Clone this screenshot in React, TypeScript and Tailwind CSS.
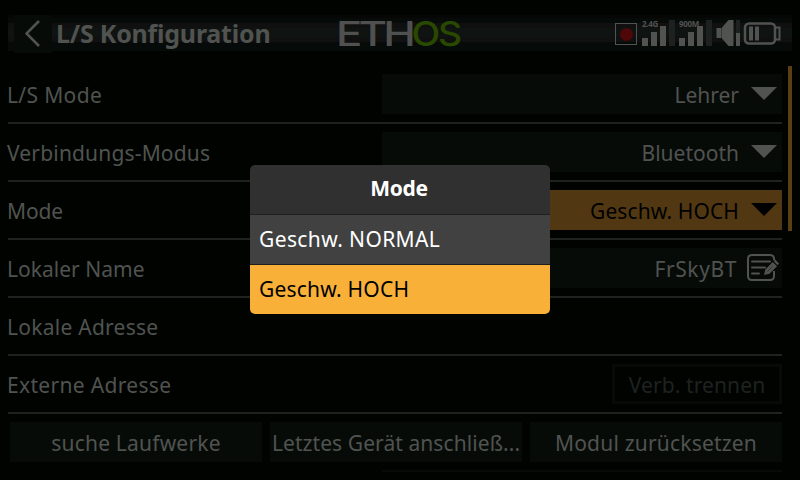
import type { ReactNode } from "react";

function Caret({ dark = false }: { dark?: boolean }) {
  return (
    <svg className={dark ? "block text-black" : "block text-[#505350]"} width="26" height="13" viewBox="0 0 26 13">
      <path d="M0 0H26L13 13Z" fill="currentColor" />
    </svg>
  );
}

function Row({ label, tracking, children }: { label: string; tracking: string; children?: ReactNode }) {
  return (
    <div className="flex h-[58px] shrink-0 items-start border-b-2 border-[#1e2220] pt-2">
      <div className={`-ml-px w-[375px] shrink-0 pt-[1px] leading-10 ${tracking}`}>{label}</div>
      <div className="flex flex-1 justify-end">{children}</div>
    </div>
  );
}

function Field({ value, tracking, active = false }: { value: string; tracking: string; active?: boolean }) {
  return (
    <div
      className={`flex h-10 w-[400px] items-start justify-end pr-[5px] ${
        active ? "bg-[#513812] text-black" : "bg-[#070b08]"
      }`}
    >
      <span className={`mr-3 pt-[1px] leading-10 ${tracking}`}>{value}</span>
      <div className="pt-[13px]">
        <Caret dark={active} />
      </div>
    </div>
  );
}

function EditIcon() {
  return (
    <svg className="block" width="32" height="28" viewBox="0 0 32 28" fill="none" stroke="#505350" strokeWidth="2">
      <path d="M27 6V5Q27 1 23 1H5Q1 1 1 5V22Q1 26 5 26H23Q27 26 27 22V17" />
      <path d="M5 7.5H23M5 13.5H18M5 19.5H12" strokeLinecap="round" />
      <path d="M17 21L18.3 15.5L25.7 8L30 12.3L22.5 19.7Z" fill="#505350" stroke="none" />
      <path d="M26.6 7.1L28.2 5.5L32 9.5L30.5 11.2Z" fill="#505350" stroke="none" />
      <path d="M20.5 17.5L25.5 12.5" stroke="#303331" strokeWidth="1" />
    </svg>
  );
}

function Signal({ label }: { label: string }) {
  return (
    <div className="relative flex h-[26px] w-[33px] items-end gap-[3px]">
      <span className="absolute left-0 -top-[1px] z-10 font-['Open_Sans'] text-[8px] leading-[9px] font-bold tracking-[-0.3px] whitespace-nowrap">
        {label}
      </span>
      <i className="h-2 w-1.5 bg-[#505350]" />
      <i className="h-3.5 w-1.5 bg-[#505350]" />
      <i className="h-5 w-1.5 bg-[#505350]" />
      <i className="h-[26px] w-1.5 bg-[#1d211f]" />
    </div>
  );
}

function StatusBar() {
  return (
    <div className="flex h-[27px] items-end">
      <div className="mr-[5px] mb-[1px] flex h-[22px] w-[22px] items-center justify-center border border-[#505350]">
        <i className="h-[13px] w-[13px] rounded-full bg-[#4f0707]" />
      </div>
      <Signal label="2.4G" />
      <i className="w-1" />
      <Signal label="900M" />
      <svg className="ml-[4px] block" width="25" height="26" viewBox="0 0 25 26">
        <path d="M0.5 8H5V18H0.5ZM6 7.5L12.5 0H17.5V26H12.5L6 18.5Z" fill="#505350" />
        <path d="M5 8H6V18H5Z" fill="#343735" />
        <path d="M20 0H24V13H20Z" fill="#1d211f" />
        <path d="M20 13H24V26H20Z" fill="#505350" />
      </svg>
      <svg className="ml-[2px] block" width="38" height="24" viewBox="0 0 38 24" fill="none" stroke="#505350" strokeWidth="2">
        <rect x="2" y="1.5" width="30" height="20" rx="4" strokeWidth="2.5" />
        <path d="M32.5 5.5H36.5V17.5H32.5" />
        <path d="M8 4.5V18.5M14 4.5V18.5" strokeWidth="4" />
      </svg>
    </div>
  );
}

function Button({ children, tracking }: { children: ReactNode; tracking: string }) {
  return (
    <div className={`h-10 bg-[#070b08] pt-[1px] text-center leading-10 whitespace-nowrap ${tracking}`}>
      {children}
    </div>
  );
}

export default function App() {
  return (
    <div className="relative flex h-[480px] w-[800px] flex-col overflow-hidden bg-[#000300] font-['Noto_Sans',sans-serif] text-[21px] text-[#505350]">
      <header className="mx-2 mt-[15px] grid h-9 grid-cols-[330px_1fr_179px] bg-[linear-gradient(#060604_0_3px,#060a08_3px_8px,#101010_8px_13px,#0f1311_13px_22px,#101010_22px_27px,#060a08_27px)]">
        <div className="flex items-center">
          <div className="ml-[6px] flex h-[38px] w-[38px] items-center justify-center bg-[#070b08]">
            <svg width="16" height="28" viewBox="0 0 16 28" fill="none" stroke="#505350" strokeWidth="2.6">
              <path d="M14 1L1.5 13.5L14 26" />
            </svg>
          </div>
          <h1 className="-mt-[2px] ml-[4px] text-[25px] leading-9 font-bold tracking-[-0.22px]">L/S Konfiguration</h1>
        </div>
        <svg
          className="block overflow-visible"
          width="126"
          height="36"
          viewBox="338 15 126 36"
          fontFamily="Inter, sans-serif"
          fontWeight="500"
          fontSize="34.4"
        >
          <text x="336" y="46" textLength="76" letterSpacing="-3" lengthAdjust="spacingAndGlyphs" fill="#505050">ETH</text>
          <text x="411.5" y="46" textLength="48.5" letterSpacing="-2" lengthAdjust="spacingAndGlyphs" fill="#294900">OS</text>
        </svg>
        <div className="flex items-start justify-end pt-[4px] pr-[11px]">
          <StatusBar />
        </div>
      </header>

      <div className="mt-[15px] flex h-[414px] pl-2">
        <main className="flex w-[774px] flex-col">
          <Row label="L/S Mode" tracking="tracking-[0.35px]">
            <Field value="Lehrer" tracking="tracking-[0px]" />
          </Row>
          <Row label="Verbindungs-Modus" tracking="tracking-[0.17px]">
            <Field value="Bluetooth" tracking="tracking-[0px]" />
          </Row>
          <Row label="Mode" tracking="tracking-[-0.1px]">
            <Field value="Geschw. HOCH" tracking="tracking-[0.1px]" active />
          </Row>
          <Row label="Lokaler Name" tracking="tracking-[0.02px]">
            <div className="flex h-10 w-[400px] justify-end bg-[#070b08] pr-[3px]">
              <span className="mr-[10px] pt-[1px] leading-10 tracking-[0.6px]">FrSkyBT</span>
              <div className="pt-[6px]">
                <EditIcon />
              </div>
            </div>
          </Row>
          <Row label="Lokale Adresse" tracking="tracking-[0.26px]" />
          <Row label="Externe Adresse" tracking="tracking-[0.32px]">
            <div className="h-10 w-[170px] border-[3px] border-[#070b08] pt-[1px] text-center leading-[34px] tracking-[0.1px] text-[#1e2220]">
              Verb. trennen
            </div>
          </Row>
          <div className="grid grid-cols-3 gap-2 pt-2 pl-[2px]">
            <Button tracking="tracking-[0.2px]">suche Laufwerke</Button>
            <Button tracking="tracking-[0.08px]">Letztes Gerät anschließ...</Button>
            <Button tracking="tracking-[0.2px]">Modul zurücksetzen</Button>
          </div>
          <div className="mt-2 ml-[374px] h-0.5 bg-[#070b08]" />
        </main>
        <div className="ml-1.5 h-[165px] w-1 bg-[#5b3e12]" />
      </div>

      <div role="dialog" className="absolute top-[165px] left-[250px] w-[300px] overflow-hidden rounded-[5px] text-white">
        <h2 className="h-[50px] border-b border-[#202020] bg-[#303030] pr-[2px] text-center leading-[47px] font-bold tracking-[-0.3px]">Mode</h2>
        <div className="h-[50px] border-b border-[#202020] bg-[#414141] pl-[9px] leading-[48px] tracking-[0.38px]">Geschw. NORMAL</div>
        <div className="h-[49px] bg-[#f9b038] pl-[9px] leading-[48px] tracking-[0.2px] text-black">Geschw. HOCH</div>
      </div>
    </div>
  );
}
